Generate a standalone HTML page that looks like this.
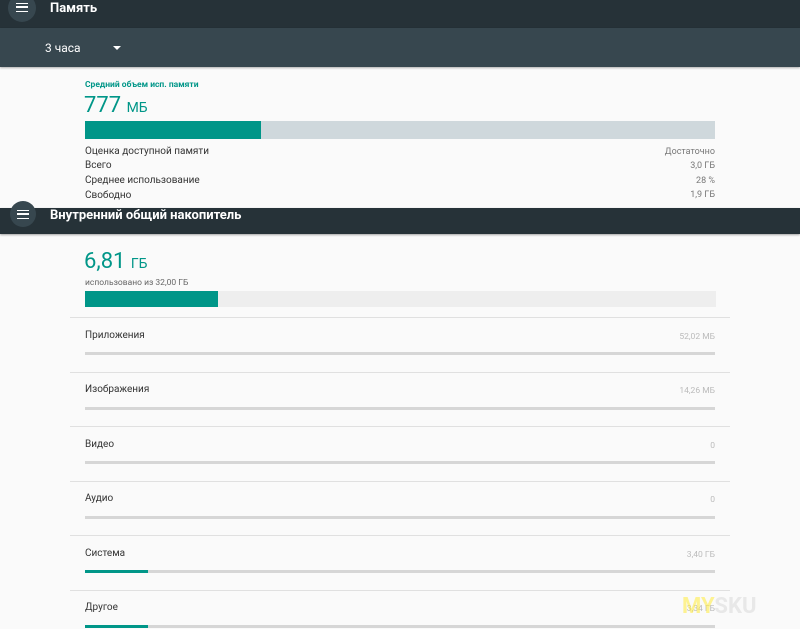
<!DOCTYPE html>
<html><head><meta charset="utf-8"><style>
*{margin:0;padding:0;box-sizing:border-box}
body{width:800px;height:629px;overflow:hidden;background:#fafafa;font-family:"Roboto","Liberation Sans","DejaVu Sans",sans-serif;position:relative}
.a{position:absolute}
.bar1{left:0;top:0;width:800px;height:28px;background:#263238}
.bar2{left:0;top:28px;width:800px;height:39px;background:#37474f;box-shadow:0 1px 2px rgba(0,0,0,.3)}
.bar3{left:0;top:208px;width:800px;height:26px;background:#263238;box-shadow:0 1px 2px rgba(0,0,0,.35)}
.circ{width:28px;height:28px;border-radius:50%;background:#37474f}
.ham{width:12px;height:9px;border-top:1.5px solid #fff;border-bottom:1.5px solid #fff}
.ham:after{content:"";position:absolute;left:0;top:2px;width:12px;height:1.5px;background:#fff}
.t{color:#fff;font-size:13px;font-weight:bold}
.k{font-size:10px;color:#333}
.v{font-size:9px;color:#777;right:85px;text-align:right}
.sep{left:70px;width:660px;height:1px;background:#e0e0e0}
.lb{left:85px;font-size:10px;color:#333}
.rv{right:85px;font-size:8.5px;color:#bbb}
.pb{left:85px;width:630px;height:3px;background:#d6d6d6}
.pb i{display:block;height:3px;background:#009688}
</style></head><body>
<div class="a bar1"></div>
<div class="a circ" style="left:8px;top:-6px"></div>
<div class="a ham" style="left:16px;top:3px"></div>
<div class="a t" style="left:50px;top:1px">Память</div>
<div class="a bar2"></div>
<div class="a t" style="left:45px;top:41px;font-weight:normal;font-size:12px">3 часа</div>
<div class="a" style="left:113px;top:46px;width:0;height:0;border-left:4px solid transparent;border-right:4px solid transparent;border-top:4px solid #fff"></div>

<div class="a" style="left:85px;top:80px;font-size:8.5px;color:#009688;font-weight:bold">Средний объем исп. памяти</div>
<div class="a" style="left:84px;top:93px;font-size:22px;color:#009688">777 <span style="font-size:14px">МБ</span></div>
<div class="a" style="left:85px;top:121px;width:630px;height:18px;background:#cfd8dc"><div style="width:176px;height:18px;background:#009688"></div></div>
<div class="a k" style="left:85px;top:146px">Оценка доступной памяти</div>
<div class="a k" style="left:85px;top:160px">Всего</div>
<div class="a k" style="left:85px;top:175px">Среднее использование</div>
<div class="a k" style="left:85px;top:190px">Свободно</div>
<div class="a v" style="top:147px">Достаточно</div>
<div class="a v" style="top:161px">3,0 ГБ</div>
<div class="a v" style="top:176px">28 %</div>
<div class="a v" style="top:190px">1,9 ГБ</div>

<div class="a bar3"></div>
<div class="a circ" style="left:10px;top:201px;width:26px;height:26px"></div>
<div class="a ham" style="left:17px;top:210px"></div>
<div class="a t" style="left:50px;top:208px">Внутренний общий накопитель</div>

<div class="a" style="left:84px;top:249px;font-size:22px;color:#009688">6,81 <span style="font-size:14px">ГБ</span></div>
<div class="a" style="left:85px;top:278px;font-size:8.5px;color:#666">использовано из 32,00 ГБ</div>
<div class="a" style="left:85px;top:291px;width:631px;height:16px;background:#eeeeee"><div style="width:133px;height:16px;background:#009688"></div></div>

<div class="a sep" style="top:317px"></div>
<div class="a lb" style="top:330px">Приложения</div><div class="a rv" style="top:332px">52,02 МБ</div>
<div class="a pb" style="top:352px"></div>
<div class="a sep" style="top:372px"></div>
<div class="a lb" style="top:384px">Изображения</div><div class="a rv" style="top:386px">14,26 МБ</div>
<div class="a pb" style="top:407px"></div>
<div class="a sep" style="top:426px"></div>
<div class="a lb" style="top:439px">Видео</div><div class="a rv" style="top:441px">0</div>
<div class="a pb" style="top:461px"></div>
<div class="a sep" style="top:481px"></div>
<div class="a lb" style="top:493px">Аудио</div><div class="a rv" style="top:495px">0</div>
<div class="a pb" style="top:516px"></div>
<div class="a sep" style="top:535px"></div>
<div class="a lb" style="top:548px">Система</div><div class="a rv" style="top:550px">3,40 ГБ</div>
<div class="a pb" style="top:570px"><i style="width:63px"></i></div>
<div class="a sep" style="top:590px"></div>
<div class="a lb" style="top:602px">Другое</div><div class="a rv" style="top:604px">3,34 ГБ</div>
<div class="a pb" style="top:625px"><i style="width:63px"></i></div>
<div class="a" style="left:682px;top:594px;font-size:22px;font-weight:bold;color:rgba(255,235,59,.55)">MY<span style="color:rgba(220,220,220,.6)">SKU</span></div>
</body></html>
